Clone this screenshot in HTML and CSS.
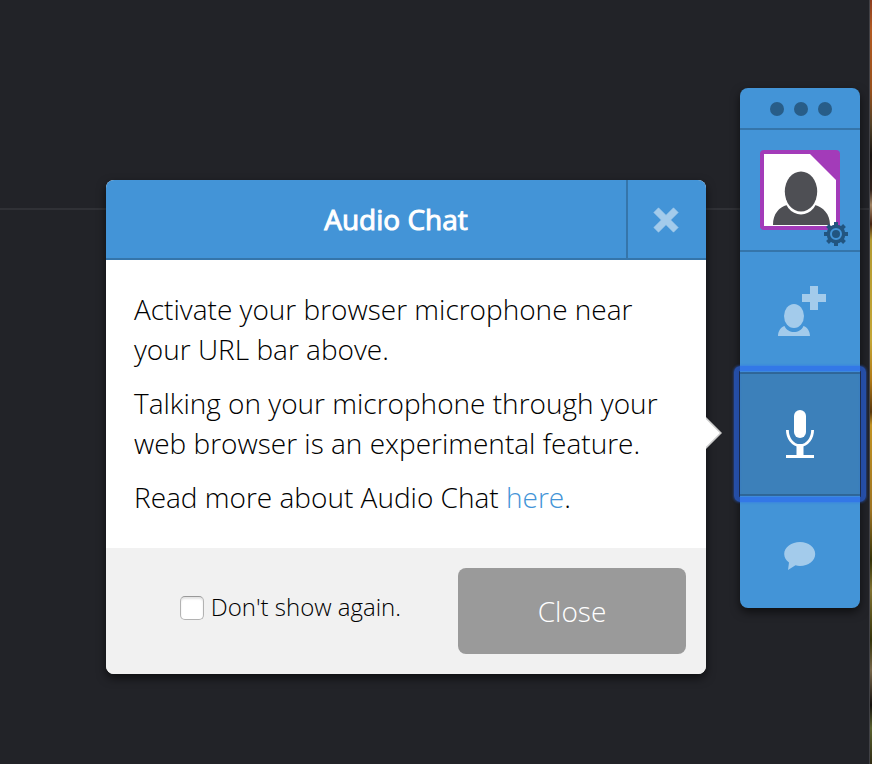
FILE: index.html
```html
<!DOCTYPE html>
<html lang="en">
<head>
<meta charset="utf-8">
<title>Audio Chat</title>
<link rel="stylesheet" href="styles.css">
</head>
<body>
<main class="stage">
  <section class="dialog">
    <header class="dialog-header">
      <h1 class="dialog-title">Audio Chat</h1>
      <button class="dialog-close" aria-label="Close dialog">
        <svg width="26" height="26" viewBox="0 0 26 26"><path d="M5.500 .8 13 8.300 20.500 .8 25.200 5.500 17.700 13 25.200 20.500 20.500 25.200 13 17.700 5.500 25.200 .8 20.500 8.300 13 .8 5.500Z" fill="#a3cbeb" stroke="#a3cbeb" stroke-width=".6"/></svg>
      </button>
    </header>
    <div class="dialog-body">
      <p>Activate your browser microphone near<br>your URL bar above.</p>
      <p>Talking on your microphone through your<br>web browser is an experimental feature.</p>
      <p>Read more about Audio Chat <a class="link">here</a>.</p>
    </div>
    <footer class="dialog-footer">
      <label class="dismiss"><input class="checkbox" type="checkbox"><span class="dismiss-text">Don't show again.</span></label>
      <button class="close-button">Close</button>
    </footer>
    <svg class="pointer" width="18" height="34" viewBox="0 0 18 34"><path d="M0 1 16 17 0 33Z" fill="#ccc"/><path d="M0 3.200 13.800 17 0 30.800Z" fill="#fff"/></svg>
  </section>

  <nav class="toolbar">
    <div class="handle"><i class="dot"></i><i class="dot"></i><i class="dot"></i></div>
    <div class="tool tool-profile">
      <div class="avatar">
        <svg width="72" height="72" viewBox="0 0 72 72">
          <path d="M46 0H72V26Z" fill="#a33bb9"/>
          <path d="M9 71C9 60 15 53 23 51C30 62 44 62 51 51C59 53 66 60 66 71Z" fill="#4e4f54"/>
          <ellipse cx="37" cy="38" rx="18" ry="22.5" fill="#fff"/>
          <ellipse cx="37" cy="37.5" rx="16.2" ry="20" fill="#4e4f54"/>
        </svg>
        <svg class="gear" width="24" height="24" viewBox="-12 -12 24 24" fill="#225580">
          <path d="M-2-12H2V12H-2Z M-12-2H12V2H-12Z"/><path d="M-2-12H2V12H-2Z M-12-2H12V2H-12Z" transform="rotate(45)"/>
          <circle r="9.4"/><circle r="5" stroke="#4394d7" stroke-width="2"/>
        </svg>
      </div>
    </div>
    <div class="tool tool-invite">
      <svg width="48" height="50" viewBox="0 0 48 50" fill="#a3cbeb"><path d="M32 0H40V8H48V16H40V24H32V16H24V8H32Z"/><ellipse cx="16" cy="30" rx="10" ry="12"/><path d="M0 50C0 45 3 41 6.500 40C10 48 22 48 25.500 40C29 41 32 45 32 50Z"/></svg>
    </div>
    <div class="tool tool-active">
      <svg width="28" height="48" viewBox="0 0 28 48"><rect x="8" width="12" height="28" rx="6" fill="#fff"/><path d="M1.400 20C1.400 28 6.500 35.500 14 35.500S26.600 28 26.600 20" fill="none" stroke="#fff" stroke-width="2.800"/><path d="M10.500 35H17.500V45H28V48H0V45H10.500Z" fill="#fff"/></svg>
    </div>
    <div class="tool tool-chat">
      <svg width="32" height="28" viewBox="0 0 32 28"><path d="M16 0C24.500 0 31.200 5.200 31.200 12S24.500 24 16 24Q13.500 24 11.500 23.300L4 28 5 20.500C2 18.500 .2 15.500 .2 12C.2 5.200 7.500 0 16 0Z" fill="#a3cbeb"/></svg>
    </div>
  </nav>
  <div class="edge"></div>
</main>
</body>
</html>
```
FILE: styles.css
```css
* { box-sizing: border-box; }

body {
  margin: 0;
  background: #222328;
  font-family: "Open Sans", sans-serif;
  font-weight: 300;
  color: #000;
}

.stage {
  display: flex;
  align-items: flex-start;
  width: 872px;
  height: 764px;
  overflow: hidden;
  background: linear-gradient(#303136, #303136) 0 208px / 869px 2px no-repeat;
}

h1, p { margin: 0; }
button { border: 0; padding: 0; font: inherit; }
svg { display: block; }

.dialog {
  position: relative;
  width: 600px;
  margin: 180px 34px 0 106px;
  background: #fff;
  border-radius: 8px;
  box-shadow: 0 4px 10px rgba(0, 0, 0, .6);
}

.dialog-header {
  display: flex;
  height: 80px;
  background: #4394d7;
  border-bottom: 2px solid #3575aa;
  border-radius: 8px 8px 0 0;
}

.dialog-title {
  flex: 1;
  padding-left: 60px;
  font-size: 28px;
  line-height: 78px;
  font-weight: 400;
  text-align: center;
  color: #fff;
  -webkit-text-stroke: 1px #fff;
}

.dialog-close {
  display: grid;
  place-items: center;
  width: 80px;
  padding-right: 2px;
  padding-top: 1px;
  background: none;
  border-left: 2px solid #3575aa;
}

.dialog-body {
  height: 288px;
  padding: 29px 28px 0;
  font-size: 28px;
  line-height: 40px;
  white-space: nowrap;
}

.dialog-body p + p { margin-top: 14px; }
.link { color: #4394d7; }

.dialog-footer {
  display: flex;
  justify-content: flex-end;
  gap: 57px;
  height: 126px;
  padding: 20px;
  background: #f1f1f1;
  border-radius: 0 0 8px 8px;
}

.dismiss {
  display: flex;
  align-items: center;
  gap: 7px;
  height: 80px;
  font-size: 24px;
  white-space: nowrap;
}

.dismiss-text { padding-bottom: 4px; }

.checkbox {
  appearance: none;
  width: 24px;
  height: 24px;
  margin: 0;
  border: 1px solid #b2b2b2;
  border-top-color: #999;
  border-radius: 5px;
  background: #fff;
  box-shadow: inset 0 2px 2px #e4e4e4;
}

.close-button {
  width: 228px;
  height: 86px;
  border-radius: 8px;
  background: #9a9a9a;
  color: #fff;
  font-size: 28px;
}

.pointer {
  position: absolute;
  left: 600px;
  top: 236px;
}

.toolbar {
  width: 120px;
  height: 520px;
  margin-top: 88px;
  background: #4394d7;
  border-radius: 8px;
  box-shadow: 0 4px 10px rgba(0, 0, 0, .6);
}

.handle {
  display: flex;
  justify-content: center;
  align-items: center;
  gap: 10px;
  height: 42px;
  padding: 2px 0 0 2px;
  border-bottom: 2px solid #3575aa;
}

.dot {
  width: 14px;
  height: 14px;
  border-radius: 50%;
  background: #285d88;
}

.tool {
  display: grid;
  place-items: center;
  height: 120px;
}

.tool-profile {
  height: 122px;
  border-bottom: 2px solid #3575aa;
}

.tool-invite { padding: 0 0 2px 4px; }

.avatar {
  position: relative;
  width: 80px;
  height: 80px;
  border: 4px solid #a33bb9;
  border-radius: 4px;
  background: #fff;
}

.gear {
  position: absolute;
  left: 60px;
  top: 68px;
}

.tool-active {
  position: relative;
  height: 124px;
  background: #3c80ba;
  border-top: 2px solid #306795;
  border-bottom: 2px solid #306795;
}

/* Keyboard focus halo */
.tool-active::after {
  content: "";
  position: absolute;
  inset: -8px -6px;
  border: 5px solid rgba(43, 105, 240, .64);
  border-radius: 6px;
  box-shadow: 0 0 2px 1px rgba(43, 105, 240, .35), inset 0 0 2px 1px rgba(43, 105, 240, .3);
}

.tool-chat { height: 112px; padding-top: 8px; }

.edge {
  width: 3px;
  height: 764px;
  margin-left: 9px;
  border-left: 1px solid #414146;
  background: linear-gradient(#8d3e20 0, #b35a21 30px, #98501c 90px, #514026 125px, #17120f 155px, #302019 190px, #a28462 205px, #45220f 224px, #b39a31 240px, #c4a636 340px, #b17a16 380px, #59370b 412px, #c29323 425px, #9e7422 510px, #343207 560px, #807130 590px, #343309 640px, #766548 670px, #14110e 705px, #59612e 728px, #302b13 764px);
}
```
